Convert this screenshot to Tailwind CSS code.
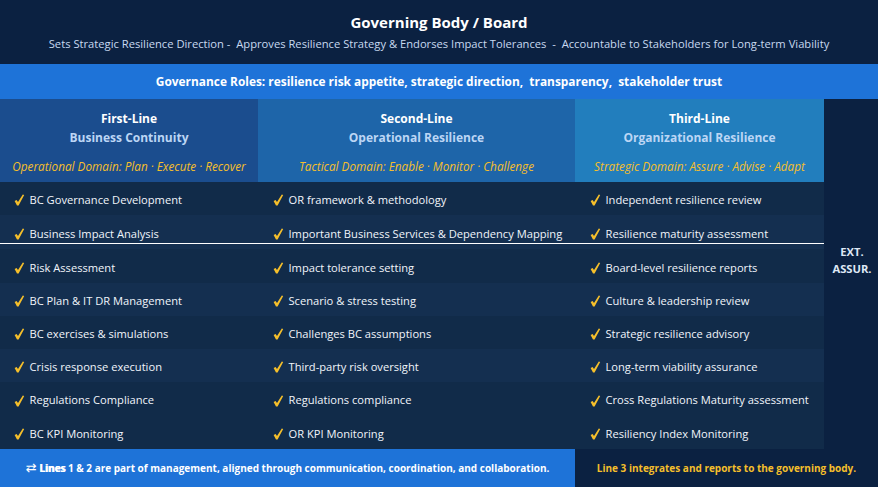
<!DOCTYPE html>
<html lang="en">
<head>
    <meta charset="UTF-8">
    <title>Resilience Three Lines</title>
    <script src="https://cdn.jsdelivr.net/npm/@tailwindcss/browser@4"></script>
</head>
<body class="w-[878px] h-[487px] overflow-hidden bg-[#0b2141] text-white font-['Open_Sans',sans-serif]">
    <!-- Board header -->
    <header class="h-[64px] flex flex-col items-center pt-[12px]">
        <h1 class="text-[15px] leading-[21px] font-bold">Governing Body / Board</h1>
        <p class="text-[11.2px] leading-[16px] mt-[3px] text-[#c8d9f0] whitespace-pre">Sets Strategic Resilience Direction -  Approves Resilience Strategy &amp; Endorses Impact Tolerances  -  Accountable to Stakeholders for Long-term Viability</p>
    </header>

    <div class="h-[35px] bg-[#1e73d8] flex items-center justify-center text-[11.9px] font-bold whitespace-pre">Governance Roles: resilience risk appetite, strategic direction,  transparency,  stakeholder trust</div>

    <div class="flex h-[350px]">
        <div class="w-[824px] relative">
            <!-- Column headers -->
            <div class="grid grid-cols-[258px_317px_249px] h-[83px] text-center">
                <div class="bg-[#1b4d8e] pt-[10px]">
                    <div class="text-[12px] leading-[19px] font-bold">First-Line</div>
                    <div class="text-[12px] leading-[19px] font-bold text-[#bcd6f5]">Business Continuity</div>
                    <div class="text-[11.75px] leading-[16px] mt-[11px] italic text-[#f5bf2b]">Operational Domain: Plan · Execute · Recover</div>
                </div>
                <div class="bg-[#1e65a9] pt-[10px]">
                    <div class="text-[12px] leading-[19px] font-bold">Second-Line</div>
                    <div class="text-[12px] leading-[19px] font-bold text-[#bcd6f5]">Operational Resilience</div>
                    <div class="text-[11.75px] leading-[16px] mt-[11px] italic text-[#f5bf2b]">Tactical Domain: Enable · Monitor · Challenge</div>
                </div>
                <div class="bg-[#227ebd] pt-[10px]">
                    <div class="text-[12px] leading-[19px] font-bold">Third-Line</div>
                    <div class="text-[12px] leading-[19px] font-bold text-[#bcd6f5]">Organizational Resilience</div>
                    <div class="text-[11.75px] leading-[16px] mt-[11px] italic text-[#f5bf2b]">Strategic Domain: Assure · Advise · Adapt</div>
                </div>
            </div>

            <!-- Checklist rows, filled by the script below -->
            <div id="rows"></div>

            <div class="absolute left-0 right-0 top-[144px] h-[1px] bg-white"></div>
        </div>
        <div class="flex-1 flex items-center justify-center text-center text-[11.2px] leading-[17px] font-bold text-[#dfe8f5] pb-[29px] pl-[2px]">EXT.<br>ASSUR.</div>
    </div>

    <footer class="flex h-[38px] text-[10px] font-bold">
        <div class="w-[575px] bg-[#1e73d8] flex items-center justify-center">
            <div class="whitespace-pre"><span class="text-[13px] leading-[13px] font-normal font-['DejaVu_Sans',sans-serif]">⇄</span> <span class="[text-shadow:0.6px_0_0_white]">Lines</span> 1 &amp; 2 are part of management, aligned through communication, coordination, and collaboration.</div>
        </div>
        <div class="flex-1 flex items-center justify-center text-[#f5bf2b]">Line 3 integrates and reports to the governing body.</div>
    </footer>

    <script>
        const rows = [
            ["BC Governance Development", "OR framework & methodology", "Independent resilience review", 33, "bg-[#112b49]", "pt-[3px]"],
            ["Business Impact Analysis", "Important Business Services & Dependency Mapping", "Resilience maturity assessment", 34, "bg-[#142f50]", "pt-[4px]"],
            ["Risk Assessment", "Impact tolerance setting", "Board-level resilience reports", 34, "bg-[#112b49]", "pt-[4px]"],
            ["BC Plan & IT DR Management", "Scenario & stress testing", "Culture & leadership review", 33, "bg-[#142f50]", "pt-[3px]"],
            ["BC exercises & simulations", "Challenges BC assumptions", "Strategic resilience advisory", 33, "bg-[#112b49]", "pt-[3px]"],
            ["Crisis response execution", "Third-party risk oversight", "Long-term viability assurance", 33, "bg-[#142f50]", "pt-[3px]"],
            ["Regulations Compliance", "Regulations compliance", "Cross Regulations Maturity assessment", 34, "bg-[#112b49]", "pt-[3px]"],
            ["BC KPI Monitoring", "OR KPI Monitoring", "Resiliency Index Monitoring", 33, "bg-[#112b49]", "pt-[3px]"]
        ];

        const check = '<svg class="w-[11px] h-[12px] shrink-0" viewBox="0 0 11 12"><path d="M0.6 7 L2.6 6 L4 8 L8.8 0.4 L10.2 1 L4.6 11.4 L3 11.4 Z" fill="#f5bf2b"/></svg>';

        function cell(text, pad, top) {
            const div = document.createElement("div");
            div.className = "flex items-center gap-[4.5px] text-[11.15px] text-[#f1f5fb] whitespace-nowrap " + pad + " " + top;
            div.innerHTML = check + "<span></span>";
            div.lastChild.textContent = text;
            return div;
        }

        const holder = document.getElementById("rows");
        rows.forEach(function (r) {
            const row = document.createElement("div");
            row.className = "grid grid-cols-[258px_317px_249px] " + r[4];
            row.style.height = r[3] + "px";
            row.append(cell(r[0], "pl-[14px]", r[5]), cell(r[1], "pl-[15px]", r[5]), cell(r[2], "pl-[15px]", r[5]));
            holder.append(row);
        });
    </script>
</body>
</html>
